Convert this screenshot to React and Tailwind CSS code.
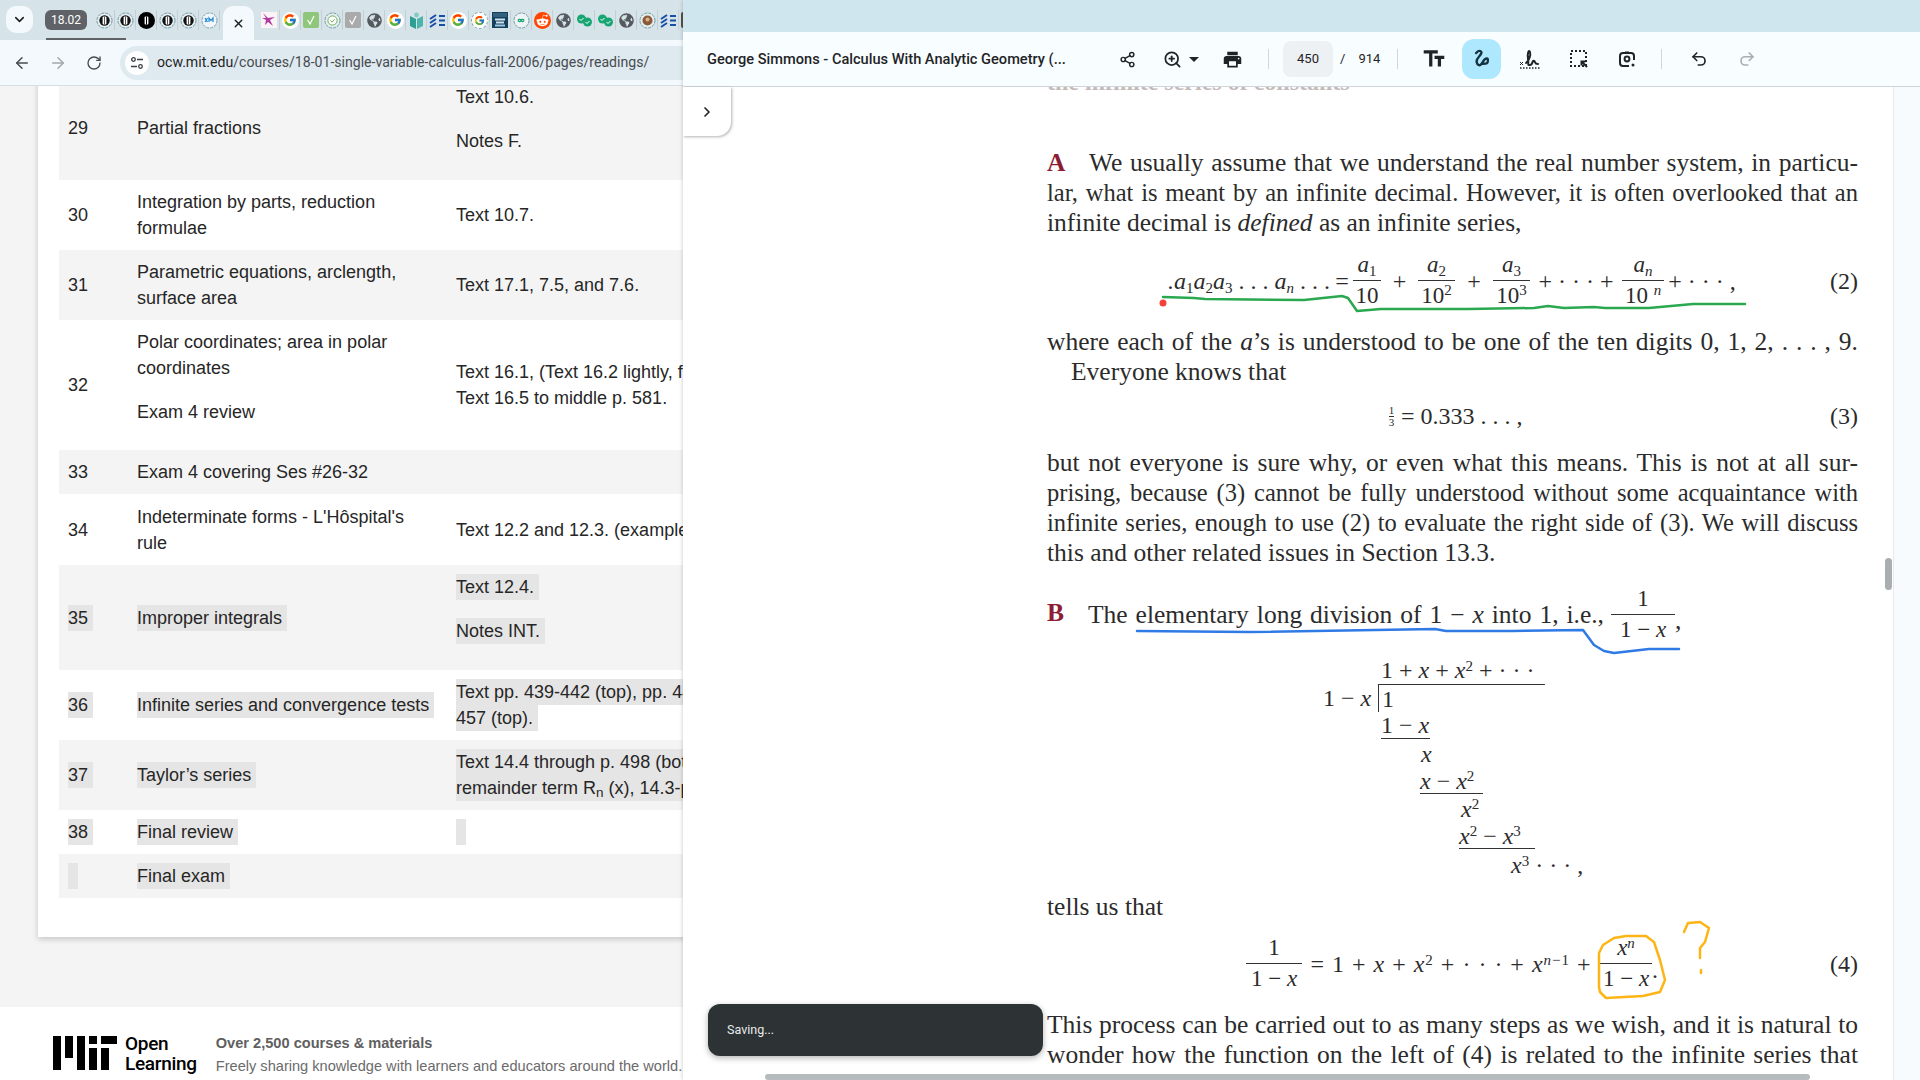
import React from "react";
import { ArrowLeft, ArrowRight, ChevronDown, ChevronRight, Redo2, RotateCw, Share2, Undo2, X, ZoomIn } from "lucide-react";
import { FcGoogle } from "react-icons/fc";
import { FaGlobeAmericas, FaRedditAlien } from "react-icons/fa";
import { MdPrint, MdTextFields } from "react-icons/md";

// favicons in the tab strip
const Ring = ({ heavy }) => (
  <svg width="17" height="17" viewBox="0 0 17 17">
    <circle cx="8.5" cy="8.5" r={heavy ? 8.5 : 7.5} fill={heavy ? "#000" : "#e6eef0"} stroke={heavy ? "none" : "#6f9aa5"} strokeDasharray="3 1" />
    {!heavy && <circle cx="8.5" cy="8.5" r="5.2" fill="#111" />}
    <rect x="6.6" y="4.5" width="3.8" height="8" rx="1" fill="#fff" />
    <rect x="8" y="4.5" width="1" height="8" fill={heavy ? "#000" : "#555"} />
  </svg>
);

const RingXm = () => (
  <svg width="17" height="17" viewBox="0 0 17 17">
    <circle cx="8.5" cy="8.5" r="7.5" fill="#f2f6f8" stroke="#7fa5b0" strokeDasharray="3 1" />
    <path d="M4 6l2.5 4M6.5 6L4 10M8 10V6l2 2.5L12 6v4" stroke="#1e88d8" strokeWidth="1.2" fill="none" />
  </svg>
);

const Goog = ({ ring }) => (
  <span className={`flex h-[17px] w-[17px] items-center justify-center rounded-full bg-white ${ring ? "border border-dashed border-[#7fa5b0]" : ""}`}>
    <FcGoogle size={ring ? 11 : 14} />
  </span>
);

const Globe = () => <FaGlobeAmericas size={15} color="#555a5e" />;

const CheckTile = ({ bg }) => (
  <svg width="16" height="16" viewBox="0 0 16 16">
    <rect width="16" height="16" rx="2" fill={bg} />
    <path d="M4.5 8l2.5 4 4-8" stroke="#fff" strokeWidth="1.2" fill="none" />
  </svg>
);

const RingCheck = () => (
  <svg width="17" height="17" viewBox="0 0 17 17">
    <circle cx="8.5" cy="8.5" r="7.5" fill="#e6eef0" stroke="#6f9aa5" strokeDasharray="3 1" />
    <circle cx="8.5" cy="8.5" r="4.6" fill="#fff" stroke="#72b35a" />
    <path d="M6.5 8.5l1.5 1.7 2.6-3" stroke="#72b35a" strokeWidth="1" fill="none" />
  </svg>
);

const RingLoop = () => (
  <svg width="17" height="17" viewBox="0 0 17 17">
    <circle cx="8.5" cy="8.5" r="7.5" fill="#eef4f5" stroke="#6f9aa5" strokeDasharray="3 1" />
    <path d="M5 8.5a1.6 1.6 0 013 0 1.6 1.6 0 003 0M5 8.5a1.6 1.6 0 003 0 1.6 1.6 0 013 0" stroke="#12a36b" strokeWidth="1.2" fill="none" />
  </svg>
);

const Splash = () => (
  <svg width="16" height="16" viewBox="0 0 16 16">
    <rect width="16" height="16" fill="#fbf3f6" />
    <path d="M2 1l5 5 7-1-5 3 3 6-5-4-3 3 1-5-4-2 4 0z" fill="#b03aa0" />
  </svg>
);

const Book = () => (
  <svg width="15" height="17" viewBox="0 0 15 17">
    <path d="M1 4l6 3v10l-6-3z" fill="#2f9e94" />
    <path d="M14 4L8 7v10l6-3z" fill="#4db6ac" />
    <circle cx="7.5" cy="3" r="2.4" fill="#80cbc4" />
  </svg>
);

const Waves = () => (
  <svg width="17" height="15" viewBox="0 0 17 15">
    <path d="M1 6l6-4M1 10l6-4M1 14l6-4M10 3h6M10 7.500h6M10 12h6" stroke="#174ea6" strokeWidth="2" fill="none" />
  </svg>
);

const Prep = () => (
  <svg width="16" height="16" viewBox="0 0 16 16">
    <rect width="16" height="16" fill="#13405c" />
    <rect x="1" y="1" width="14" height="4" fill="#33617d" />
    <rect x="3" y="6.500" width="10" height="2" fill="#cfe3ee" />
    <rect x="4" y="9.500" width="8" height="2" fill="#cfe3ee" />
    <rect x="3" y="12.500" width="10" height="2" fill="#9fc6da" />
  </svg>
);

const Reddit = () => (
  <span className="flex h-[17px] w-[17px] items-center justify-center rounded-full bg-[#ff4500]">
    <FaRedditAlien size={13} color="#fff" />
  </span>
);

const DoubleCheck = () => (
  <svg width="17" height="13" viewBox="0 0 17 13">
    <circle cx="5.500" cy="5" r="4.500" fill="#17a673" />
    <circle cx="11.500" cy="8" r="4.500" fill="#17a673" />
    <path d="M3.500 5l1.500 1.500 2.500-2.500M9.500 8l1.500 1.500 2.500-2.500" stroke="#fff" strokeWidth="1" fill="none" />
  </svg>
);

const RingOwl = () => (
  <svg width="17" height="17" viewBox="0 0 17 17">
    <circle cx="8.5" cy="8.5" r="7.5" fill="#e6eef0" stroke="#6f9aa5" strokeDasharray="3 1" />
    <circle cx="8.5" cy="8.5" r="5" fill="#8a5a3a" />
    <circle cx="8.5" cy="7.500" r="2" fill="#d8b48c" />
  </svg>
);

const favRing = [<Ring />, <Ring />, <Ring heavy />, <Ring />, <Ring />, <RingXm />];
const favRest = [
  <Splash />, <Goog />, <CheckTile bg="#8fc77a" />, <RingCheck />, <CheckTile bg="#a9aaa9" />, <Globe />, <Goog />,
  <Book />, <Waves />, <Goog />, <Goog ring />, <Prep />, <RingLoop />, <Reddit />, <Globe />, <DoubleCheck />,
  <DoubleCheck />, <Globe />, <RingOwl />, <Waves />, <CheckTile bg="#5a5046" />,
];

const Fav = ({ children }) => (
  <span className="flex h-5 w-[21px] shrink-0 items-center justify-center border-r border-[#c2d0d5]">{children}</span>
);

const TabStrip = () => (
  <div className="relative flex h-10 shrink-0 items-start overflow-hidden bg-[#d6e3e8]">
    <button className="ml-[6px] mt-[6px] flex h-[27px] w-[27px] shrink-0 items-center justify-center rounded-[10px] bg-[#f3f9fc]">
      <ChevronDown size={15} strokeWidth={2.5} color="#1f1f1f" />
    </button>
    <span className="ml-[12px] mt-[10px] flex h-5 w-[42px] shrink-0 items-center justify-center rounded-[6px] bg-[#5f6368] font-['Roboto',sans-serif] text-[12px] text-white">18.02</span>
    <div className="ml-[7px] mt-[10px] flex shrink-0">
      {favRing.map((f, i) => (
        <Fav key={i}>{f}</Fav>
      ))}
    </div>
    <div className="ml-[3px] mt-[6px] flex h-[34px] w-[31px] shrink-0 items-center justify-center rounded-t-[10px] bg-[#f3f9fc]">
      <X size={13} strokeWidth={2.5} color="#1f1f1f" />
    </div>
    <div className="ml-[5px] mt-[10px] flex shrink-0">
      {favRest.map((f, i) => (
        <Fav key={i}>{f}</Fav>
      ))}
    </div>
    <div className="absolute bottom-0 left-[46px] h-[2px] w-[80px] bg-[#5f6368]" />
  </div>
);

const SiteIcon = () => (
  <svg width="14" height="14" viewBox="0 0 14 14" fill="none" stroke="#3c4043" strokeWidth="1.3">
    <circle cx="3.500" cy="3.500" r="1.800" />
    <path d="M7 3.500h6M1 10.500h6" />
    <circle cx="10.500" cy="10.500" r="1.800" />
  </svg>
);

const AddressBar = () => (
  <div className="flex h-[46px] shrink-0 items-center border-b border-[#d5e0e5] bg-[#f3f9fc]">
    <ArrowLeft className="ml-[13px] shrink-0" size={18} color="#474b4f" />
    <ArrowRight className="ml-[18px] shrink-0" size={18} color="#a3a8ab" />
    <RotateCw className="ml-[19px] shrink-0" size={16} color="#474b4f" />
    <div className="ml-[18px] flex h-[34px] w-[600px] shrink-0 items-center rounded-full bg-[#dfeaf0] pl-[5px]">
      <span className="flex h-6 w-6 shrink-0 items-center justify-center rounded-full bg-white">
        <SiteIcon />
      </span>
      <span className="ml-[8px] whitespace-nowrap pt-[1px] font-['Roboto',sans-serif] text-[14.100px] text-[#474b4f]">
        <span className="text-[#1f1f1f]">ocw.mit.edu</span>/courses/18-01-single-variable-calculus-fall-2006/pages/readings/
      </span>
    </div>
  </div>
);

// selected text on the OCW page
const Hl = ({ children, full }) => (
  <span className={`h-[26px] whitespace-nowrap bg-[#e5e5e5] leading-[26px] ${full ? "block w-[300px]" : "inline-block min-w-[10px] pr-[5px] align-top"}`}>{children}</span>
);

const Lines = ({ children }) => <div className="leading-[26px]">{children}</div>;

const Row = ({ h, odd, num, topic, text, top, topicTop }) => (
  <div className={`flex items-center ${h} ${odd ? "bg-[#f4f4f4]" : "bg-white"}`}>
    <div className="w-[78px] shrink-0 pl-[9px]">
      <Lines>{num}</Lines>
    </div>
    <div className={`w-[319px] shrink-0 ${topicTop ? "self-start pt-[9px]" : ""}`}>{topic}</div>
    <div className={`w-[300px] shrink-0 whitespace-nowrap ${top ? "self-start pt-[9px]" : ""}`}>{text}</div>
  </div>
);

const Table = () => (
  <div className="font-['Liberation_Sans',Arial,sans-serif] text-[18px] text-[#262626]">
    <Row h="h-[105px]" odd num="29" topic={<Lines>Partial fractions</Lines>} top text={<><p className="leading-[26px]">Text 10.6.</p><p className="mt-[18px] leading-[26px]">Notes F.</p></>} />
    <Row h="h-[70px]" num="30" topic={<Lines>Integration by parts, reduction<br />formulae</Lines>} text={<Lines>Text 10.7.</Lines>} />
    <Row h="h-[70px]" odd num="31" topic={<Lines>Parametric equations, arclength,<br />surface area</Lines>} text={<Lines>Text 17.1, 7.5, and 7.6.</Lines>} />
    <Row h="h-[130px]" num="32" topicTop topic={<><Lines>Polar coordinates; area in polar<br />coordinates</Lines><p className="mt-[18px] leading-[26px]">Exam 4 review</p></>} text={<Lines>Text 16.1, (Text 16.2 lightly, for<br />Text 16.5 to middle p. 581.</Lines>} />
    <Row h="h-[44px]" odd num="33" topic={<Lines>Exam 4 covering Ses #26-32</Lines>} text={null} />
    <Row h="h-[71px]" num="34" topic={<Lines>Indeterminate forms - L'Hôspital's<br />rule</Lines>} text={<Lines>Text 12.2 and 12.3. (examples</Lines>} />
    <Row h="h-[105px]" odd num={<Hl>35</Hl>} topic={<Lines><Hl>Improper integrals</Hl></Lines>} top text={<><Lines><Hl>Text 12.4.</Hl></Lines><div className="mt-[18px]"><Lines><Hl>Notes INT.</Hl></Lines></div></>} />
    <Row h="h-[70px]" num={<Hl>36</Hl>} topic={<Lines><Hl>Infinite series and convergence tests</Hl></Lines>} text={<><Hl full>Text pp. 439-442 (top), pp. 447-</Hl><Hl>457 (top).</Hl></>} />
    <Row h="h-[70px]" odd num={<Hl>37</Hl>} topic={<Lines><Hl>Taylor’s series</Hl></Lines>} text={<><Hl full>Text 14.4 through p. 498 (bottom),</Hl><Hl full>remainder term R<sub>n</sub> (x), 14.3-p. 490</Hl></>} />
    <Row h="h-[44px]" num={<Hl>38</Hl>} topic={<Lines><Hl>Final review</Hl></Lines>} text={<Lines><Hl /></Lines>} />
    <Row h="h-[44px]" odd num={<Hl />} topic={<Lines><Hl>Final exam</Hl></Lines>} text={null} />
  </div>
);

const MitLogo = () => (
  <svg className="shrink-0" width="64" height="34" viewBox="0 0 64 34" fill="#000">
    <rect x="0" width="8" height="34" />
    <rect x="12" width="8" height="22" />
    <rect x="24" width="8" height="34" />
    <rect x="36" width="8" height="8" />
    <rect x="36" y="12" width="8" height="22" />
    <rect x="48" width="16" height="8" />
    <rect x="48" y="12" width="8" height="22" />
  </svg>
);

const Footer = () => (
  <div className="flex h-[73px] items-center bg-white pl-[53px] pt-[18px]">
    <MitLogo />
    <div className="ml-[8px] pt-[3px] font-['Roboto',sans-serif] text-[19px] font-medium leading-[20px] tracking-[-0.3px] text-black">
      Open
      <br />
      Learning
    </div>
    <div className="ml-[19px] whitespace-nowrap pt-[4px] font-['Liberation_Sans',Arial,sans-serif] text-[14.600px] text-[#6b6b6b]">
      <div className="font-bold leading-[22px] text-[#5f5f5f]">Over 2,500 courses &amp; materials</div>
      <div className="leading-[24px]">Freely sharing knowledge with learners and educators around the world.</div>
    </div>
  </div>
);

const LeftPane = () => (
  <div className="flex h-full w-[683px] shrink-0 flex-col overflow-hidden">
    <TabStrip />
    <AddressBar />
    <div className="flex-1 overflow-hidden bg-[#f4f4f4]">
      <div className="-mt-[11px] ml-[38px] w-[700px] bg-white pb-[39px] pl-[21px] shadow-[0_2px_6px_rgba(0,0,0,0.2)]">
        <Table />
      </div>
      <div className="mt-[70px]">
        <Footer />
      </div>
    </div>
  </div>
);

// pdf toolbar drawings
const PenIcon = () => (
  <svg width="26" height="26" viewBox="0 0 22 22" fill="none" stroke="#14323f" strokeWidth="2" strokeLinecap="round">
    <path d="M6 6c2-3 6-2 4 1s-5 5-3 8 4 0 5-2 4-4 4-1-1 3-4 3" />
  </svg>
);

const SignIcon = () => (
  <svg width="22" height="22" viewBox="0 0 22 22" fill="none" stroke="#1f2426">
    <path d="M1 14l3 3M4 14l-3 3" strokeWidth="1" />
    <path d="M7 15c3-2 5-8 4-11s-3 1-2 7-1 6 2 6 2-5 4-4 0 3 4 3" strokeWidth="2" strokeLinecap="round" />
    <path d="M1 20h20" strokeWidth="1.500" strokeDasharray="1.500 1.500" />
  </svg>
);

const SelectIcon = () => (
  <svg width="20" height="20" viewBox="0 0 20 20" fill="none" stroke="#1f2426">
    <rect x="2" y="2" width="15" height="15" strokeWidth="2" strokeDasharray="2 2" />
    <path d="M18 18l-5-5M12.500 16.500v-4h4" strokeWidth="2" />
  </svg>
);

const CameraIcon = () => (
  <svg width="20" height="20" viewBox="0 0 20 20" fill="none" stroke="#1f2426" strokeWidth="2">
    <path d="M8 3.500h4M12 17H6a3 3 0 01-3-3V7a3 3 0 013-3h8a3 3 0 013 3v4" />
    <circle cx="10" cy="10" r="2.400" />
    <circle cx="16" cy="16" r="1.500" fill="#1f2426" stroke="none" />
  </svg>
);

const Divider = ({ className }) => <span className={`h-[20px] w-px shrink-0 bg-[#d3d7d9] ${className}`} />;

const PdfToolbar = () => (
  <div className="flex h-[55px] shrink-0 items-center border-b border-[#cfd5d8] bg-[#f8fdff] font-['Roboto',sans-serif] text-[#1f2426]">
    <span className="ml-[24px] w-[340px] shrink-0 whitespace-nowrap pt-[1px] text-[14.600px] font-medium">George Simmons - Calculus With Analytic Geometry (...</span>
    <Share2 className="ml-[72px] shrink-0" size={17} strokeWidth={2} />
    <ZoomIn className="ml-[27px] shrink-0" size={19} strokeWidth={2.200} />
    <span className="ml-[7px] h-0 w-0 border-x-[5px] border-t-[5px] border-x-transparent border-t-[#1f2426]" />
    <MdPrint className="ml-[23px] shrink-0" size={21} />
    <Divider className="ml-[25px]" />
    <span className="ml-[14px] flex h-9 w-[50px] shrink-0 items-center justify-center rounded-[8px] bg-[#eef1f3] text-[13px]">450</span>
    <span className="ml-[7px] text-[13px]">/</span>
    <span className="ml-[13px] text-[13px]">914</span>
    <Divider className="ml-[17px]" />
    <MdTextFields className="ml-[23px] shrink-0" size={26} />
    <span className="ml-[15px] flex h-10 w-[39px] shrink-0 items-center justify-center rounded-[12px] bg-[#aee8ff]">
      <PenIcon />
    </span>
    <span className="ml-[18px]"><SignIcon /></span>
    <span className="ml-[28px]"><SelectIcon /></span>
    <span className="ml-[28px]"><CameraIcon /></span>
    <Divider className="ml-[24px]" />
    <Undo2 className="ml-[28px] shrink-0" size={18} strokeWidth={2.200} />
    <Redo2 className="ml-[30px] shrink-0" size={18} strokeWidth={2.200} color="#a9adaf" />
  </div>
);

// book page
const I = ({ children }) => <i>{children}</i>;
const Sub = ({ children }) => <sub className="text-[15px]">{children}</sub>;
const Sup = ({ children }) => <sup className="text-[15px]">{children}</sup>;

const Line = ({ children, className = "" }) => (
  <p className={`h-[30px] whitespace-normal text-justify leading-[30px] [text-align-last:justify] ${className}`}>{children}</p>
);

const Plain = ({ children, className = "" }) => <p className={`h-[30px] whitespace-nowrap leading-[30px] ${className}`}>{children}</p>;

const Frac = ({ num, den, w }) => (
  <div className={`flex shrink-0 flex-col items-center text-[23px] ${w}`}>
    <div className="flex h-[30px] w-full items-center justify-center whitespace-nowrap border-b border-[#333]">{num}</div>
    <div className="flex h-[30px] w-full items-center justify-center whitespace-nowrap">{den}</div>
  </div>
);

const Mid = ({ children, w }) => <span className={`shrink-0 whitespace-nowrap text-center ${w}`}>{children}</span>;

const Equation = ({ children, number, h = "h-[60px]", className = "" }) => (
  <div className={`flex items-center text-[24px] ${h} ${className}`}>
    {children}
    <span className="ml-auto">({number})</span>
  </div>
);

const DivRow = ({ ml, children, h, rule, w }) => (
  <div className={`flex items-center text-[24px] leading-none ${ml} ${h} ${rule ? `${w} border-b border-[#333]` : ""}`}>
    <span className="whitespace-nowrap">{children}</span>
  </div>
);

const LongDivision = () => (
  <div className="mt-[11px]">
    <DivRow ml="ml-[334px]" h="h-[28px]">1 + <I>x</I> + <I>x</I><Sup>2</Sup> + · · ·</DivRow>
    <div className="ml-[276px] flex h-[28px] items-center text-[24px]">
      <span className="w-[55px] whitespace-nowrap">1 − <I>x</I></span>
      <span className="flex h-full w-[167px] items-center border-l border-t border-[#333] pl-[3px]">1</span>
    </div>
    <DivRow ml="ml-[334px]" h="h-[27px]" rule w="w-[49px]">1 − <I>x</I></DivRow>
    <DivRow ml="ml-[374px]" h="h-[29px]"><I>x</I></DivRow>
    <DivRow ml="ml-[373px]" h="h-[26px]" rule w="w-[63px]"><I>x</I> − <I>x</I><Sup>2</Sup></DivRow>
    <DivRow ml="ml-[414px]" h="h-[29px]"><I>x</I><Sup>2</Sup></DivRow>
    <DivRow ml="ml-[412px]" h="h-[26px]" rule w="w-[76px]"><I>x</I><Sup>2</Sup> − <I>x</I><Sup>3</Sup></DivRow>
    <DivRow ml="ml-[464px]" h="h-[32px]"><I>x</I><Sup>3</Sup> · · · ,</DivRow>
  </div>
);

const Page = () => (
  <div className="h-full flex-1 overflow-hidden bg-white pl-[364px] font-['Liberation_Serif','Times_New_Roman',serif] text-[25.500px] text-[#2b2b2b]">
    <div className="-mt-[20px] w-[811px]">
      <Plain className="w-[308px] overflow-hidden text-[24px] font-bold text-[#c4baba]">the infinite series of constants</Plain>

      <div className="mt-[51px] flex h-[30px]">
        <b className="w-[42px] shrink-0 leading-[30px] text-[#8c1d35]">A</b>
        <Line className="flex-1">We usually assume that we understand the real number system, in particu-</Line>
      </div>
      <Line className="text-[24.500px]">lar, what is meant by an infinite decimal. However, it is often overlooked that an</Line>
      <Plain>infinite decimal is <I>defined</I> as an infinite series,</Plain>

      <Equation number="2" className="mt-[13px]">
        <Mid w="ml-[120px] w-[164px]"><I>.a</I><Sub>1</Sub><I>a</I><Sub>2</Sub><I>a</I><Sub>3</Sub> . . . <I>a<Sub>n</Sub></I> . . .</Mid>
        <Mid w="w-[22px]">=</Mid>
        <Frac w="w-[28px]" num={<span><I>a</I><Sub>1</Sub></span>} den="10" />
        <Mid w="w-[37px]">+</Mid>
        <Frac w="w-[37px]" num={<span><I>a</I><Sub>2</Sub></span>} den={<span>10<Sup>2</Sup></span>} />
        <Mid w="w-[38px]">+</Mid>
        <Frac w="w-[37px]" num={<span><I>a</I><Sub>3</Sub></span>} den={<span>10<Sup>3</Sup></span>} />
        <Mid w="w-[92px]">+ · · · +</Mid>
        <Frac w="w-[42px]" num={<span><I>a<Sub>n</Sub></I></span>} den={<span>10 <Sup><I>n</I></Sup></span>} />
        <Mid w="w-[76px]">+ · · · ,</Mid>
      </Equation>

      <Line className="mt-[16px]">where each of the <I>a</I>’s is understood to be one of the ten digits 0, 1, 2, . . . , 9.</Line>
      <Plain className="ml-[24px]">Everyone knows that</Plain>

      <Equation number="3" h="h-[30px]" className="mt-[14px]">
        <div className="ml-[339px] flex w-[11px] flex-col items-center text-[11px] leading-[11px]">
          <span className="border-b border-[#333]">1</span>
          <span>3</span>
        </div>
        <span className="ml-[4px]">= 0.333 . . . ,</span>
      </Equation>

      <Line className="mt-[17px]">but not everyone is sure why, or even what this means. This is not at all sur-</Line>
      <Line className="text-[24.500px]">prising, because (3) cannot be fully understood without some acquaintance with</Line>
      <Line className="text-[24.500px]">infinite series, enough to use (2) to evaluate the right side of (3). We will discuss</Line>
      <Plain>this and other related issues in Section 13.3.</Plain>

      <div className="mt-[17px] flex h-[60px] items-center">
        <b className="w-[41px] shrink-0 -translate-y-[2px] text-[#8c1d35]">B</b>
        <span className="w-[516px] shrink-0 text-justify [text-align-last:justify]">The elementary long division of 1 − <I>x</I> into 1, i.e.,</span>
        <span className="ml-[7px]"><Frac w="w-[64px]" num="1" den={<span>1 − <I>x</I></span>} /></span>
        <span className="translate-y-[6px]">,</span>
      </div>

      <LongDivision />

      <Plain className="mt-[11px]">tells us that</Plain>

      <Equation number="4" className="mt-[12px]">
        <div className="ml-[199px]"><Frac w="w-[56px]" num="1" den={<span>1 − <I>x</I></span>} /></div>
        <Mid w="w-[298px] tracking-[1px]">= 1 + <I>x</I> + <I>x</I><Sup>2</Sup> + · · · + <I>x</I><Sup><I>n</I>−1</Sup> +</Mid>
        <Frac w="w-[52px]" num={<span><I>x<Sup>n</Sup></I></span>} den={<span>1 − <I>x</I></span>} />
        <span className="translate-y-[6px]">.</span>
      </Equation>

      <Line className="mt-[16px]">This process can be carried out to as many steps as we wish, and it is natural to</Line>
      <Line>wonder how the function on the left of (4) is related to the infinite series that</Line>
      <Plain className="ml-[120px]">the function on the right. This is in that</Plain>
    </div>
  </div>
);

const Ink = () => (
  <svg className="pointer-events-none absolute left-0 top-0" width="1920" height="1080" viewBox="0 0 1920 1080" fill="none" strokeWidth="2.500" strokeLinecap="round" strokeLinejoin="round">
    <polyline stroke="#2aa84f" points="1163,297 1194,298 1205,299 1304,300 1342,296 1348,298 1357,311 1381,309 1468,309 1534,308 1548,306 1564,308 1594,307 1605,308 1649,308 1693,304 1745,304" />
    <circle cx="1163" cy="303" r="3.500" fill="#f44336" />
    <polyline stroke="#2f7ae5" points="1137,631 1249,632 1435,629 1446,631 1512,631 1583,630 1594,645 1604,651 1614,653 1649,649 1679,649" />
    <polyline stroke="#fdb515" points="1599,953 1603,945 1614,938 1626,936 1646,936 1654,942 1660,960 1665,980 1660,992 1643,996 1606,998 1600,992 1599,987 1599,953" />
    <polyline stroke="#fdb515" points="1684,932 1688,923 1700,922 1709,928 1705,942 1700,948 1700,958" />
    <line x1="1701" y1="970" x2="1701" y2="973" stroke="#fdb515" />
  </svg>
);

const RightPane = () => (
  <div className="relative flex h-full w-[1237px] shrink-0 flex-col overflow-hidden shadow-[-1px_0_3px_rgba(0,0,0,0.15)]">
    <div className="h-8 shrink-0 bg-[#cfe6ee]" />
    <PdfToolbar />
    <div className="flex min-h-0 flex-1">
      <Page />
      <div className="w-[27px] shrink-0 border-l border-[#e6eaec] bg-[#f8fbfd]" />
    </div>
    <button className="absolute left-0 top-[87px] flex h-[49px] w-[48px] items-center justify-center rounded-br-[14px] bg-white shadow-[1px_1px_3px_rgba(0,0,0,0.3)]">
      <ChevronRight size={16} strokeWidth={2.500} color="#1f2426" />
    </button>
    <div className="absolute right-[28px] top-[558px] h-[32px] w-[7px] rounded-full bg-[#a9aeb1]" />
    <div className="absolute bottom-0 left-[82px] h-[6px] w-[1045px] rounded-full bg-[#b6bbbd]" />
    <div className="absolute bottom-[24px] left-[25px] flex h-[52px] w-[335px] items-center rounded-[12px] bg-[#2d3234] pl-[19px] font-['Roboto',sans-serif] text-[12.500px] text-[#e8eaed] shadow-[0_2px_6px_rgba(0,0,0,0.3)]">
      Saving...
    </div>
  </div>
);

export default function App() {
  return (
    <div className="relative flex h-[1080px] w-[1920px] overflow-hidden bg-white">
      <LeftPane />
      <RightPane />
      <Ink />
    </div>
  );
}
